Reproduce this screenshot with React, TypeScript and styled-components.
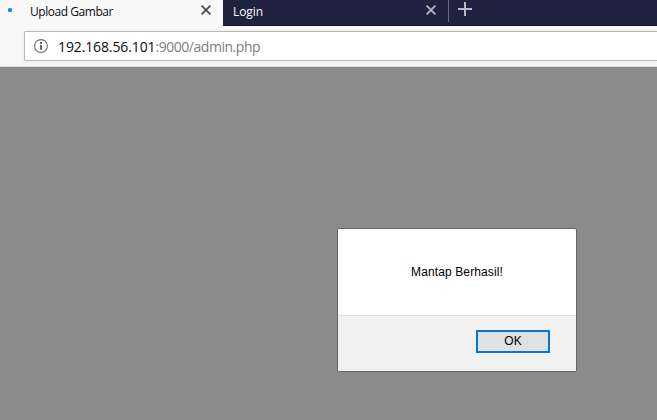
import React from "react";
import styled, { createGlobalStyle } from "styled-components";

const GlobalStyle = createGlobalStyle`
  * { box-sizing: border-box; }
  body { margin: 0; overflow: hidden; }
`;

const Browser = styled.div`
  display: flex;
  flex-direction: column;
  width: 657px;
  height: 420px;
  overflow: hidden;
  background: #8b8b8b;
  font-family: "Open Sans", sans-serif;
`;

const TabStrip = styled.div`
  display: flex;
  flex: none;
  height: 26px;
  background: #202340;
  box-shadow: inset 0 -1px #15152f;
`;

const Tab = styled.div<{ $active?: boolean }>`
  display: flex;
  align-items: flex-start;
  width: ${(p) => (p.$active ? 223 : 225)}px;
  height: 26px;
  padding-left: ${(p) => (p.$active ? 7 : 10)}px;
  background: ${(p) => (p.$active ? "#f9f9fa" : "transparent")};
  color: ${(p) => (p.$active ? "#0c0c0d" : "#f9f9fa")};
`;

const Loading = styled.span`
  width: 4px;
  height: 4px;
  margin: 8px 18px 0 1px;
  border-radius: 1.5px;
  background: #0a84ff;
`;

const TabTitle = styled.span<{ $spacing: number }>`
  flex: 1;
  font-size: 12px;
  line-height: 16px;
  padding-top: 4px;
  letter-spacing: ${(p) => p.$spacing}px;
  white-space: nowrap;
`;

const CloseIcon = styled.svg<{ $right: number }>`
  flex: none;
  width: 10px;
  height: 10px;
  margin: 5px ${(p) => p.$right}px 0 0;
  fill: none;
  stroke-width: 1.8;
`;

const Divider = styled.span`
  width: 1px;
  height: 22px;
  background: #686a7c;
`;

const PlusIcon = styled.svg`
  width: 14px;
  height: 14px;
  margin: 2px 0 0 9px;
`;

const Toolbar = styled.div`
  display: flex;
  flex: none;
  height: 41px;
  padding: 5px 0 5px 24px;
  border-bottom: 1px solid #d7dada;
  background: #f8f8f9;
`;

const AddressBar = styled.div`
  display: flex;
  align-items: center;
  flex: 1;
  height: 30px;
  padding-left: 9px;
  border: 1px solid #b8b8b8;
  border-right: 0;
  border-radius: 2px 0 0 2px;
  background: #fff;
  box-shadow: 0 1px 4px rgba(0, 0, 0, 0.05);
`;

const InfoIcon = styled.svg`
  width: 14px;
  height: 14px;
  margin-right: 10px;
`;

const Address = styled.span`
  color: #808080;
  font-size: 14px;
  line-height: 20px;
  padding-top: 2px;
  letter-spacing: -0.46px;
  white-space: nowrap;
`;

const Host = styled.span`
  color: #0c0c0d;
  letter-spacing: -0.12px;
`;

const Page = styled.main`
  flex: 1;
  padding: 161px 0 0 337px;
`;

const Dialog = styled.section`
  display: flex;
  flex-direction: column;
  width: 240px;
  height: 144px;
  border: 1px solid #666;
  border-radius: 2px;
  background: #fff;
  overflow: hidden;
  color: #000;
  font-family: "Liberation Sans", Arial, sans-serif;
  font-size: 12px;
`;

const Message = styled.div`
  display: flex;
  align-items: center;
  justify-content: center;
  height: 86px;
  letter-spacing: 0.12px;
`;

const Actions = styled.div`
  display: flex;
  flex: 1;
  justify-content: flex-end;
  padding: 14px 26px 0 0;
  border-top: 1px solid #dfdfdf;
  background: #f1f1f1;
`;

const OkButton = styled.button`
  width: 74px;
  height: 23px;
  padding: 0;
  border: 2px solid #0078d7;
  background: #e1e1e1;
  color: #000;
  font: 12px/17px "Liberation Sans", Arial, sans-serif;
`;

function Close({ color, right }: { color: string; right: number }) {
  return (
    <CloseIcon $right={right} viewBox="0 0 10 10" stroke={color}>
      <path d="M.6.6l8.8 8.8M9.4.6L.6 9.4" />
    </CloseIcon>
  );
}

export default function App() {
  return (
    <>
      <GlobalStyle />
      <Browser>
        <TabStrip>
          <Tab $active>
            <Loading />
            <TabTitle $spacing={-0.45}>Upload Gambar</TabTitle>
            <Close color="#4c4c4d" right={12} />
          </Tab>
          <Tab>
            <TabTitle $spacing={-0.1}>Login</TabTitle>
            <Close color="#b5b6c0" right={12} />
          </Tab>
          <Divider />
          <PlusIcon viewBox="0 0 14 14">
            <path d="M7 0v14M0 7h14" fill="none" stroke="#b9bac4" strokeWidth="2" />
          </PlusIcon>
        </TabStrip>
        <Toolbar>
          <AddressBar>
            <InfoIcon viewBox="0 0 14 14">
              <circle cx="7" cy="7" r="6.4" fill="none" stroke="#707070" strokeWidth="1.1" />
              <path d="M7 3v1.9M7 6v4.8" fill="none" stroke="#606060" strokeWidth="1.9" />
            </InfoIcon>
            <Address>
              <Host>192.168.56.101</Host>:9000/admin.php
            </Address>
          </AddressBar>
        </Toolbar>
        <Page>
          <Dialog role="alertdialog">
            <Message>Mantap Berhasil!</Message>
            <Actions>
              <OkButton>OK</OkButton>
            </Actions>
          </Dialog>
        </Page>
      </Browser>
    </>
  );
}
